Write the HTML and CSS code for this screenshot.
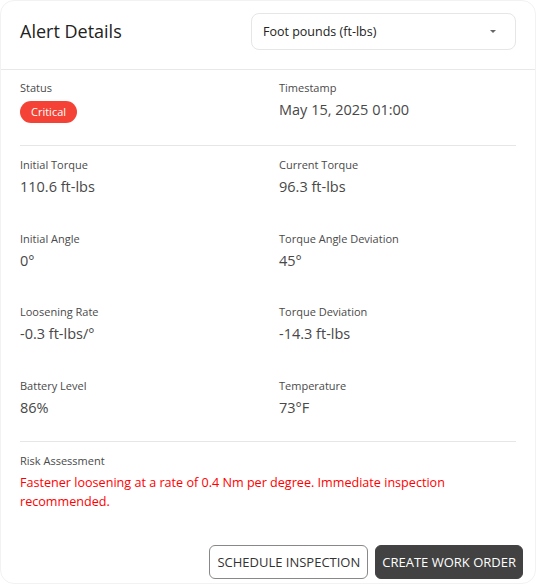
FILE: index.html
```html
<!DOCTYPE html>
<html lang="en">
<head>
    <meta charset="UTF-8">
    <title>Alert Details</title>
    <link rel="stylesheet" href="styles.css">
</head>
<body>
    <div class="dialog">
        <!-- header with unit picker -->
        <div class="dialog-header">
            <h2 class="dialog-title">Alert Details</h2>
            <div class="unit-select">
                <span>Foot pounds (ft-lbs)</span>
                <span class="caret"></span>
            </div>
        </div>

        <div class="dialog-body">
            <div class="grid">
                <div class="field">
                    <div class="label">Status</div>
                    <span class="chip">Critical</span>
                </div>
                <div class="field">
                    <div class="label">Timestamp</div>
                    <div class="value">May 15, 2025 01:00</div>
                </div>
            </div>

            <hr class="divider">

            <div class="grid metrics">
                <div class="field">
                    <div class="label">Initial Torque</div>
                    <div class="value">110.6 ft-lbs</div>
                </div>
                <div class="field">
                    <div class="label">Current Torque</div>
                    <div class="value">96.3 ft-lbs</div>
                </div>
                <div class="field">
                    <div class="label">Initial Angle</div>
                    <div class="value">0°</div>
                </div>
                <div class="field">
                    <div class="label">Torque Angle Deviation</div>
                    <div class="value">45°</div>
                </div>
                <div class="field">
                    <div class="label">Loosening Rate</div>
                    <div class="value">-0.3 ft-lbs/°</div>
                </div>
                <div class="field">
                    <div class="label">Torque Deviation</div>
                    <div class="value">-14.3 ft-lbs</div>
                </div>
                <div class="field">
                    <div class="label">Battery Level</div>
                    <div class="value">86%</div>
                </div>
                <div class="field">
                    <div class="label">Temperature</div>
                    <div class="value">73°F</div>
                </div>
            </div>

            <hr class="divider">

            <div class="field">
                <div class="label">Risk Assessment</div>
                <p class="risk">Fastener loosening at a rate of 0.4 Nm per degree. Immediate inspection recommended.</p>
            </div>
        </div>

        <div class="dialog-actions">
            <button class="btn btn-outline">Schedule Inspection</button>
            <button class="btn btn-dark">Create Work Order</button>
        </div>
    </div>
</body>
</html>
```

FILE: styles.css
```css
* {
    box-sizing: border-box;
}

body {
    margin: 0;
    font-family: "Open Sans", "Liberation Sans", sans-serif;
    background-color: #fff;
    color: #333;
}

.dialog {
    width: 536px;
    height: 584px;
    background-color: #fff;
    border: 1px solid #f2f2f2;
    border-radius: 14px;
    display: flex;
    flex-direction: column;
}

.dialog-header {
    display: flex;
    justify-content: space-between;
    align-items: center;
    padding: 12px 19px 19px 19px;
    border-bottom: 1px solid #e8e8e8;
}

.dialog-title {
    margin: 0 0 2px 0;
    font-size: 18px;
    font-weight: 400;
    color: #222;
}

.unit-select {
    width: 265px;
    height: 37px;
    border: 1px solid #e6e6e6;
    border-radius: 8px;
    display: flex;
    align-items: center;
    justify-content: space-between;
    padding: 0 19px 0 11px;
    font-size: 12.5px;
    color: #222;
}

.caret {
    width: 0;
    height: 0;
    border-left: 3px solid transparent;
    border-right: 3px solid transparent;
    border-top: 3px solid #666;
}

.dialog-body {
    padding: 10px 19px 0 19px;
    flex: 1;
}

.grid {
    display: grid;
    grid-template-columns: 259px 1fr;
}

.metrics {
    row-gap: 32.5px;
}

.field {
    display: flex;
    flex-direction: column;
    align-items: flex-start;
}

.label {
    font-size: 11px;
    color: #4a4a4a;
    line-height: 16px;
}

.value {
    margin-top: 3px;
    font-size: 14.5px;
    color: #484848;
    line-height: 22px;
}

.chip {
    margin-top: 5px;
    background-color: #f44336;
    color: #fff;
    font-size: 11px;
    line-height: 22px;
    padding: 0 11px;
    border-radius: 11px;
}

.divider {
    border: none;
    border-top: 1px solid #e6e6e6;
    margin: 22px 0 11px 0;
}

.metrics + .divider {
    margin-top: 22.5px;
}

.risk {
    margin: 3.5px 0 0 0;
    font-size: 12.6px;
    line-height: 19px;
    color: #f00;
}

.dialog-actions {
    display: flex;
    justify-content: flex-end;
    gap: 7px;
    padding: 0 12px 4px 0;
}

.btn {
    font-family: inherit;
    font-size: 13px;
    height: 34px;
    padding: 0 7px;
    border-radius: 6px;
    text-transform: uppercase;
    cursor: pointer;
}

.btn-outline {
    background-color: #fff;
    color: #333;
    border: 1px solid #888;
}

.btn-dark {
    padding: 0 6px;
    background-color: #424242;
    color: #fff;
    border: 1px solid #424242;
}
```
